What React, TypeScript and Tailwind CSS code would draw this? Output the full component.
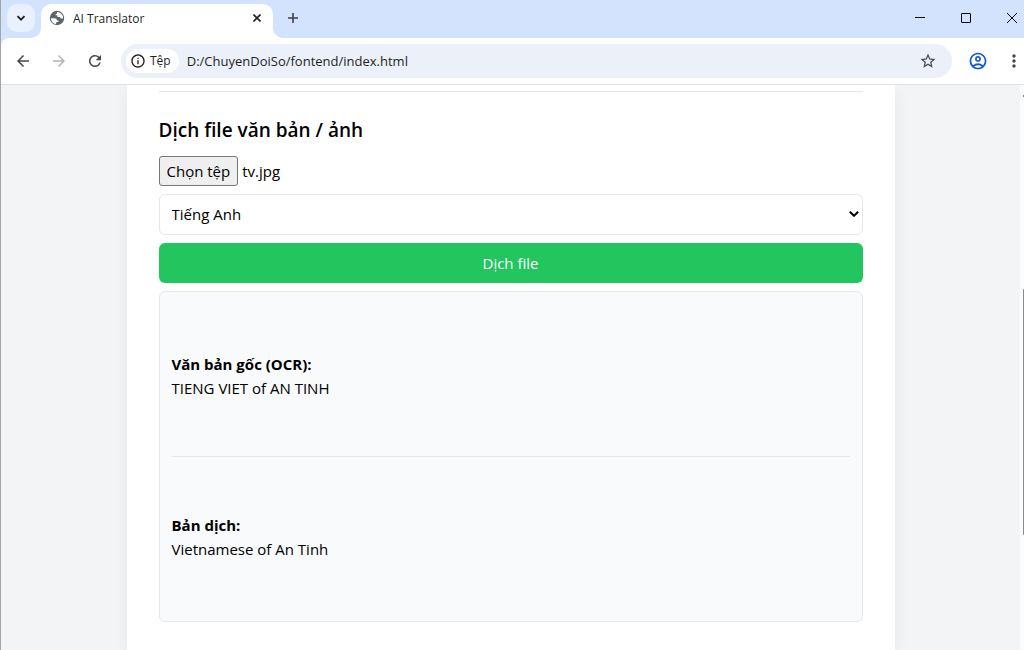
import { useRef, useState } from "react";
import type { ReactNode } from "react";
import {
  MdArrowBack,
  MdArrowForward,
  MdInfoOutline,
  MdMoreVert,
  MdOutlineAccountCircle,
  MdRefresh,
  MdStarBorder,
} from "react-icons/md";

function GlobeIcon() {
  return (
    <svg viewBox="0 0 16 16" className="size-4 shrink-0" aria-hidden="true">
      <circle cx="8" cy="8" r="7.2" fill="#5f6368" />
      <path
        d="M2 8.300h3.600c1.600 0 2.300.8 2.300 2.100h1.600v1.700H7.200v2.100C4.400 14 2 11.700 2 8.300z"
        fill="#fff"
      />
      <path
        d="M8 1.900c2.400-.1 4.300 1.200 5.300 3.200.6 1.100.8 2.200.7 3.400h-1.300c-1 0-1.600-.7-1.600-1.600H8.400V5.300H6.700V3.700H8z"
        fill="#fff"
      />
    </svg>
  );
}

function IconButton({
  label,
  className,
  children,
}: {
  label: string;
  className: string;
  children: ReactNode;
}) {
  return (
    <button
      type="button"
      aria-label={label}
      className={`flex shrink-0 items-center justify-center ${className}`}
    >
      {children}
    </button>
  );
}

function TabFlare({ className }: { className: string }) {
  return (
    <svg
      viewBox="0 0 10 10"
      className={`absolute bottom-0 size-[10px] ${className}`}
      aria-hidden="true"
    >
      <path d="M10 0v10H0A10 10 0 0 0 10 0z" fill="#fff" />
    </svg>
  );
}

function TabStrip() {
  return (
    <div className="flex h-[38px] shrink-0 pl-[6px] text-[#1f1f1f]">
      <IconButton label="Tìm kiếm thẻ" className="mt-1 size-7 rounded-[10px] bg-[#e9f0fe]">
        <svg viewBox="0 0 10 10" className="size-[10px]" aria-hidden="true">
          <path d="M1.500 3.200 5 6.700l3.500-3.500" fill="none" stroke="currentColor" strokeWidth="1.800" />
        </svg>
      </IconButton>
      <div className="relative ml-[6px] mt-1 flex w-[232px] items-center rounded-t-[10px] bg-white pb-[6px] pl-2 pr-2">
        <TabFlare className="-left-[10px]" />
        <GlobeIcon />
        <span className="ml-2 flex-1 pt-px text-[12px] leading-4">AI Translator</span>
        <IconButton label="Đóng thẻ" className="size-4">
          <svg viewBox="0 0 8 8" className="size-2" aria-hidden="true">
            <path d="m.5.5 7 7m0-7-7 7" stroke="currentColor" strokeWidth="1.600" />
          </svg>
        </IconButton>
        <TabFlare className="-right-[10px] -scale-x-100" />
      </div>
      <IconButton label="Thẻ mới" className="ml-[6px] mt-1 size-7">
        <svg viewBox="0 0 12 12" className="size-3" aria-hidden="true">
          <path d="M6 1v10M1 6h10" stroke="#3c4043" strokeWidth="1.600" />
        </svg>
      </IconButton>
      <div className="ml-auto flex h-9 text-black">
        <IconButton label="Thu nhỏ" className="w-[46px]">
          <svg viewBox="0 0 10 10" className="size-[10px]" aria-hidden="true">
            <path d="M0 4.500h10" stroke="currentColor" />
          </svg>
        </IconButton>
        <IconButton label="Phóng to" className="w-[46px]">
          <svg viewBox="0 0 10 10" className="size-[10px]" aria-hidden="true">
            <rect x=".5" y=".5" width="9" height="9" rx=".5" fill="none" stroke="currentColor" />
          </svg>
        </IconButton>
        <IconButton label="Đóng" className="-mr-[11px] w-[46px]">
          <svg viewBox="0 0 10 10" className="size-[10px]" aria-hidden="true">
            <path d="m0 0 10 10M10 0 0 10" stroke="currentColor" />
          </svg>
        </IconButton>
      </div>
    </div>
  );
}

function Toolbar() {
  return (
    <div className="flex h-[47px] shrink-0 items-center rounded-tl-lg border-b border-[#dfe1e0] bg-white pl-[13px] text-[#474747]">
      <IconButton label="Quay lại" className="size-[18px]">
        <MdArrowBack className="size-[18px]" />
      </IconButton>
      <IconButton label="Tiến" className="ml-[18px] size-[18px] text-[#b4b4b4]">
        <MdArrowForward className="size-[18px]" />
      </IconButton>
      <IconButton label="Tải lại" className="ml-[18px] size-[18px]">
        <MdRefresh className="size-[18px]" />
      </IconButton>
      <div className="ml-[17px] flex h-[34px] min-w-0 flex-1 items-center rounded-full bg-[#ebf0f9] pl-[5px] pr-[14px]">
        <button
          type="button"
          className="flex h-6 shrink-0 items-center gap-1 rounded-full bg-white pl-1 pr-2 text-[12px] font-medium text-[#1f1f1f]"
        >
          <MdInfoOutline className="size-4" />
          Tệp
        </button>
        <input
          type="text"
          aria-label="Thanh địa chỉ"
          defaultValue="D:/ChuyenDoiSo/fontend/index.html"
          className="ml-2 min-w-0 flex-1 bg-transparent text-[13px] leading-5 text-[#1f1f1f] outline-none"
        />
        <IconButton label="Đánh dấu trang" className="size-5">
          <MdStarBorder className="size-[18px]" />
        </IconButton>
      </div>
      <IconButton label="Hồ sơ" className="ml-4 size-5 text-[#0b57d0]">
        <MdOutlineAccountCircle className="size-5" />
      </IconButton>
      <IconButton label="Tuỳ chọn khác" className="ml-4 size-5">
        <MdMoreVert className="size-5" />
      </IconButton>
    </div>
  );
}

function FilePicker() {
  const inputRef = useRef<HTMLInputElement>(null);
  const [fileName, setFileName] = useState("tv.jpg");
  return (
    <div className="flex items-center gap-1">
      <input
        ref={inputRef}
        type="file"
        aria-label="Tệp cần dịch"
        tabIndex={-1}
        className="sr-only"
        onChange={(event) => setFileName(event.target.files?.[0]?.name ?? fileName)}
      />
      <button
        type="button"
        onClick={() => inputRef.current?.click()}
        className="h-[30px] rounded-[3px] border border-[#767676] bg-[#efefef] px-[7px]"
      >
        Chọn tệp
      </button>
      <span>{fileName}</span>
    </div>
  );
}

function TranslatorCard() {
  return (
    <main className="mx-auto w-full max-w-3xl bg-white px-8 pt-[6px] shadow-[0_4px_16px_rgba(0,0,0,0.06)]">
      <hr className="border-[#e5e7eb]" />
      <h2 className="mb-3 mt-6 text-[19px] font-semibold leading-7">Dịch file văn bản / ảnh</h2>
      <FilePicker />
      <div className="relative mt-2">
        <select
          aria-label="Ngôn ngữ đích"
          className="h-[41px] w-full appearance-none rounded-md border border-[#e5e7eb] bg-white px-3"
        >
          <option>Tiếng Anh</option>
          <option>Tiếng Việt</option>
        </select>
        <svg
          viewBox="0 0 10 6"
          className="pointer-events-none absolute right-1 top-[17px] h-[6px] w-[10px]"
          aria-hidden="true"
        >
          <path d="m.8.800 4.200 4 4.200-4" fill="none" stroke="#000" strokeWidth="2" />
        </svg>
      </div>
      <button type="button" className="mt-2 h-10 w-full rounded-md bg-[#22c55e] text-white">
        Dịch file
      </button>
      <section className="mt-2 rounded-md border border-[#e5e7eb] bg-[#f9fafb] px-3">
        <div className="pb-14 pt-[60px] leading-6">
          <strong>Văn bản gốc (OCR):</strong>
          <p>TIENG VIET of AN TINH</p>
        </div>
        <hr className="border-[#e5e7eb]" />
        <div className="pb-[60px] pt-14 leading-6">
          <strong>Bản dịch:</strong>
          <p>Vietnamese of An Tinh</p>
        </div>
      </section>
    </main>
  );
}

export default function App() {
  return (
    <div className="flex h-screen flex-col overflow-hidden border-l border-[#a3a5a8] bg-[#d3e3fd] font-['Open_Sans','Noto_Sans',sans-serif]">
      <TabStrip />
      <Toolbar />
      <div className="flex min-h-0 flex-1 bg-[#f3f4f6] text-[15px] text-black">
        <div className="flex min-w-0 flex-1 overflow-hidden">
          <TranslatorCard />
        </div>
        <div className="flex w-1 shrink-0 flex-col items-end bg-[#fcfcfc]" aria-hidden="true">
          <div className="mt-[10px] h-[2px] w-px bg-[#8b8b8b]" />
          <div className="mt-48 h-[246px] w-px rounded-l-sm bg-[#8b8b8b]" />
        </div>
      </div>
    </div>
  );
}
